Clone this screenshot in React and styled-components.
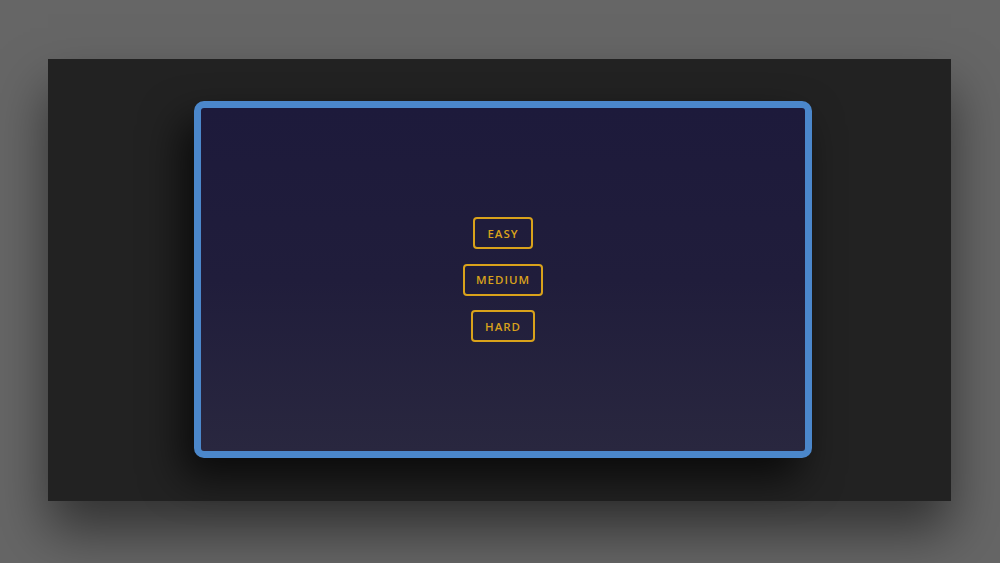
import styled, { createGlobalStyle } from 'styled-components'

const GlobalStyle = createGlobalStyle`
  html, body {
    margin: 0;
    padding: 0;
    background: #666666;
  }
`

const Page = styled.div`
  width: 1000px;
  height: 563px;
  padding: 59px 0 0 48px;
  box-sizing: border-box;
  overflow: hidden;
`

const Stage = styled.div`
  width: 903px;
  height: 442px;
  background: #222222;
  box-shadow: 0 30px 50px rgba(0, 0, 0, 0.5);
  padding: 42px 0 0 146px;
  box-sizing: border-box;
`

const Screen = styled.div`
  width: 618px;
  height: 357px;
  box-sizing: border-box;
  border: 7px solid #4b87cb;
  border-radius: 10px;
  background: linear-gradient(180deg, #1d1a3b 0%, #201d3b 50%, #29273f 100%);
  box-shadow: -12px 20px 40px rgba(0, 0, 0, 0.7);
  display: flex;
  flex-direction: column;
  align-items: center;
  justify-content: center;
  gap: 14.5px;
`

const LevelButton = styled.button`
  height: 32px;
  padding: 0 10px;
  min-width: ${(props) => props.width}px;
  background: transparent;
  border: 2px solid #d9a21b;
  border-radius: 4px;
  color: #d9a21b;
  font-family: 'Open Sans', 'Liberation Sans', sans-serif;
  font-size: 11.5px;
  font-weight: 600;
  letter-spacing: 1px;
  cursor: pointer;
`

const levels = [
  { key: 'easy', name: 'EASY', width: 60 },
  { key: 'medium', name: 'MEDIUM', width: 80 },
  { key: 'hard', name: 'HARD', width: 64 },
]

function App() {
  return (
    <>
      <GlobalStyle />
      <Page>
        <Stage>
          <Screen>
            {
              levels.map((item) => (
                <LevelButton key={item.key} width={item.width}>{item.name}</LevelButton>
              ))
            }
          </Screen>
        </Stage>
      </Page>
    </>
  )
}

export default App
